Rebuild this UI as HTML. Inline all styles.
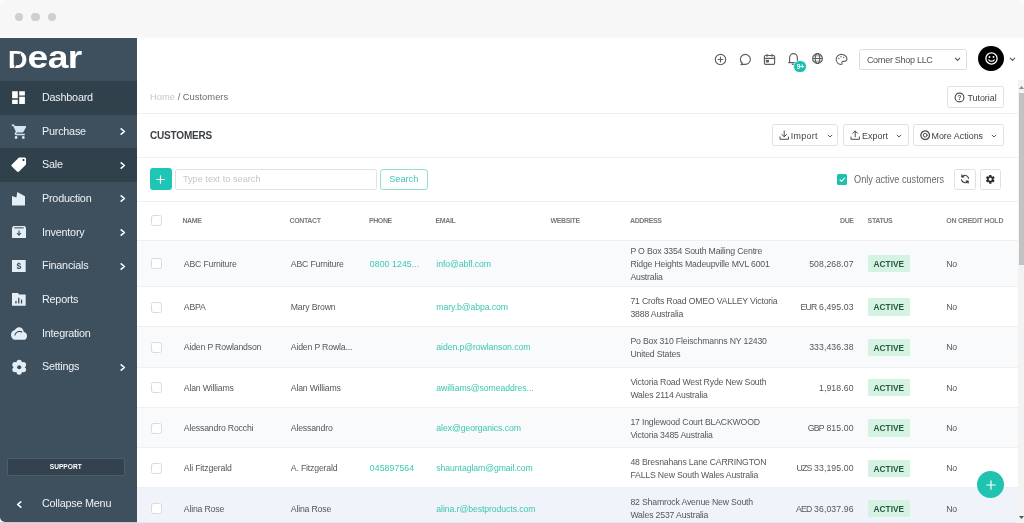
<!DOCTYPE html>
<html lang="en">
<head>
<meta charset="utf-8">
<title>Customers</title>
<style>
*{box-sizing:border-box;margin:0;padding:0}
html,body{width:1024px;height:523px;overflow:hidden;background:#fff}
body{font-family:"Liberation Sans",sans-serif;color:#5a5f66;position:relative;font-size:9.4px}
.abs{position:absolute}
#chrome{border-radius:4px 4px 0 0;position:absolute;left:0;top:0;width:1024px;height:38px;background:#f7f7f7;border-bottom:1px solid #fcfcfc}
.dot{position:absolute;top:12.7px;width:8.6px;height:8.6px;border-radius:50%;background:#cfcfcf}
/* sidebar */
#side{will-change:transform;position:absolute;left:0;top:38px;width:137px;height:484px;background:#3e505e;border-bottom-left-radius:5px;overflow:hidden}
.mi{position:absolute;left:0;width:137px;height:33.67px;color:#eef2f5;font-size:10.8px;line-height:33.67px;letter-spacing:-0.22px}
.mi.dk{background:#30414b}
.mi span{position:absolute;left:42px;top:0;white-space:nowrap}
.mi svg.ic{position:absolute;left:10.5px;top:8.8px;width:16px;height:16px}
.mi svg.ch{position:absolute;left:119px;top:12.3px;width:8px;height:9px}
#support{position:absolute;left:6.5px;top:420px;width:118.5px;height:18px;background:#33424e;border:1px solid #4d5e6b;border-radius:2px;color:#fff;font-weight:bold;font-size:6.6px;text-align:center;line-height:16px}
/* header */
#hdr{will-change:transform;position:absolute;left:137px;top:38px;width:887px;height:42.5px;background:#fff;border-bottom:1px solid #ececec}
#main{will-change:transform;position:absolute;left:137px;top:80px;width:880.5px;height:443px;background:#fff}
.hl{position:absolute;left:0;width:880.5px;height:1px;background:#efefef}
.btn{position:absolute;border:1px solid #e0e0e0;border-radius:2.5px;background:#fff;color:#3f4347;font-size:8.9px;letter-spacing:0;white-space:nowrap}
.t{position:absolute;white-space:nowrap}
.th{position:absolute;top:135px;font-size:7px;font-weight:bold;color:#787b7f;letter-spacing:-0.38px;white-space:nowrap;line-height:10px}
.row{position:absolute;left:0;width:880.5px;border-bottom:1px solid #f0f0f1}
.row.tint{background:#f9fafb}
.row.hov{background:#f1f3fb}
.cb{position:absolute;left:14px;width:11px;height:11px;border:1px solid #dadada;border-radius:2.5px;background:#fff}
.c{position:absolute;white-space:nowrap;line-height:13px;color:#53575c;font-size:8.7px;letter-spacing:-0.17px}
.em{letter-spacing:-0.08px}
.du{letter-spacing:0.1px}
.ph{letter-spacing:0.1px}
.cur{letter-spacing:-0.75px}
.lnk{color:#3cc7b4}
.badge{position:absolute;left:730.5px;width:42.7px;height:17.2px;background:#d4f3e3;color:#27573f;font-weight:bold;font-size:8.3px;line-height:18.9px;text-align:center;border-radius:1px;letter-spacing:0.05px}
#sb{position:absolute;left:1017.5px;top:80px;width:6.5px;height:443px;background:#f3f3f3}
#sbt{position:absolute;left:1px;top:13px;width:5.5px;height:172px;background:#c2c2c2}
#fab{position:absolute;left:977px;top:471.3px;width:27px;height:27px;border-radius:50%;background:#1fc3b0}
</style>
</head>
<body>
<div id="chrome">
  <div class="dot" style="left:14.8px"></div>
  <div class="dot" style="left:31.3px"></div>
  <div class="dot" style="left:47.9px"></div>
</div>

<div id="side">
  <div id="logo" class="abs" style="left:7.6px;top:2px;height:34px;white-space:nowrap;color:#fff;font-weight:bold;line-height:34px;transform-origin:0 50%;transform:scaleX(1.165)"><span style="font-size:23.2px">D</span><span style="font-size:32px;letter-spacing:-0.5px">ear</span></div>
  <svg class="abs" style="left:10px;top:12px;width:16px;height:20px" viewBox="0 0 16 20"><path d="M10.600 3.600L4.400 17.400" stroke="#3e505e" stroke-width="1.300" fill="none"/></svg>
  <div class="mi dk" style="top:43px"><svg class="abs" style="left:10px;top:8.0px;width:17px;height:17px" viewBox="0 0 24 24" ><g fill="#fff"><path d="M3 13h8V3H3v10zm0 8h8v-6H3v6zm10 0h8V11h-8v10zm0-18v6h8V3h-8z"/></g></svg><span>Dashboard</span></div>
  <div class="mi" style="top:76.67px"><svg class="abs" style="left:11.4px;top:8.2px;width:17.4px;height:17.4px" viewBox="0 0 24 24" ><g fill="#d3e4f2"><path d="M7 18c-1.1 0-1.99.9-1.99 2S5.900 22 7 22s2-.9 2-2-.9-2-2-2zM1 2v2h2l3.600 7.590-1.350 2.450c-.16.28-.25.61-.25.96 0 1.1.9 2 2 2h12v-2H7.420c-.14 0-.25-.11-.25-.25l.03-.12.9-1.630h7.450c.75 0 1.410-.41 1.750-1.030l3.580-6.490c.08-.14.12-.31.12-.48 0-.55-.45-1-1-1H5.210l-.94-2H1zm16 16c-1.1 0-1.990.9-1.990 2s.89 2 1.990 2 2-.9 2-2-.9-2-2-2z"/></g></svg><span>Purchase</span><svg class="abs" style="left:119.3px;top:12.3px;width:8px;height:9px" viewBox="0 0 8 9"><path d="M2.200 1.800 L5.400 4.500 L2.200 7.200" fill="none" stroke="#fff" stroke-width="1.600" stroke-linecap="round" stroke-linejoin="round"/></svg></div>
  <div class="mi dk" style="top:110.33px"><svg class="abs" style="left:10.0px;top:7.5px;width:17.5px;height:17.5px" viewBox="0 0 24 24" ><g fill="#fff"><path transform="translate(24 0) scale(-1 1)" d="M21.410 11.580l-9-9C12.050 2.220 11.550 2 11 2H4c-1.1 0-2 .9-2 2v7c0 .55.22 1.050.59 1.420l9 9c.36.36.86.58 1.410.58.55 0 1.050-.22 1.410-.59l7-7c.37-.36.59-.86.59-1.410 0-.55-.23-1.060-.59-1.420zM5.500 7C4.670 7 4 6.330 4 5.500S4.670 4 5.500 4 7 4.670 7 5.500 6.330 7 5.500 7z"/></g></svg><span>Sale</span><svg class="abs" style="left:119.3px;top:12.3px;width:8px;height:9px" viewBox="0 0 8 9"><path d="M2.200 1.800 L5.400 4.500 L2.200 7.200" fill="none" stroke="#fff" stroke-width="1.600" stroke-linecap="round" stroke-linejoin="round"/></svg></div>
  <div class="mi" style="top:144px"><svg class="abs" style="left:12.3px;top:10.4px;width:13px;height:13.6px" viewBox="0 0 13 13.600" ><g fill="#e4eef7"><path d="M0 13.600 V3.900 L4.400 5.500 L5.300 0 L13 4.200 V13.600 Z"/></g></svg><span>Production</span><svg class="abs" style="left:119.3px;top:12.3px;width:8px;height:9px" viewBox="0 0 8 9"><path d="M2.200 1.800 L5.400 4.500 L2.200 7.200" fill="none" stroke="#fff" stroke-width="1.600" stroke-linecap="round" stroke-linejoin="round"/></svg></div>
  <div class="mi" style="top:177.67px"><svg class="abs" style="left:12px;top:10.3px;width:14px;height:12.4px" viewBox="0 0 14 12.400"><path fill="#e4eef7" d="M1.300 0H12.700L14 1.700V11.400a1 1 0 0 1-1 1H1a1 1 0 0 1-1-1V1.700Z"/><rect x="2.300" y="1.300" width="9.400" height="1.100" fill="#3e505e"/><path d="M7 4.400V8.800M5 7L7 9.200L9 7" fill="none" stroke="#3e505e" stroke-width="1.100"/></svg><span>Inventory</span><svg class="abs" style="left:119.3px;top:12.3px;width:8px;height:9px" viewBox="0 0 8 9"><path d="M2.200 1.800 L5.400 4.500 L2.200 7.200" fill="none" stroke="#fff" stroke-width="1.600" stroke-linecap="round" stroke-linejoin="round"/></svg></div>
  <div class="mi" style="top:211.33px"><svg class="abs" style="left:12px;top:10.6px;width:13.7px;height:12px" viewBox="0 0 13.700 12" ><g fill="#e4eef7"><path d="M0 0H13.700V12H0Z"/><text x="6.850" y="9.100" text-anchor="middle" font-family="Liberation Sans,sans-serif" font-weight="bold" font-size="8.600" fill="#3e505e">$</text></g></svg><span>Financials</span><svg class="abs" style="left:119.3px;top:12.3px;width:8px;height:9px" viewBox="0 0 8 9"><path d="M2.200 1.800 L5.400 4.500 L2.200 7.200" fill="none" stroke="#fff" stroke-width="1.600" stroke-linecap="round" stroke-linejoin="round"/></svg></div>
  <div class="mi" style="top:245px"><svg class="abs" style="left:12px;top:10.1px;width:13.7px;height:12.7px" viewBox="0 0 13.700 12.700" ><g fill="#e4eef7"><path d="M0 0H6L7 1.600H13.700V12.700H0Z"/><g fill="#3e505e"><rect x="3.300" y="8" width="1.300" height="2.500"/><rect x="6.100" y="4.800" width="1.300" height="5.700"/><rect x="8.900" y="6.600" width="1.300" height="3.900"/></g></g></svg><span>Reports</span></div>
  <div class="mi" style="top:278.67px"><svg class="abs" style="left:10.9px;top:7.5px;width:16px;height:19px" viewBox="0 0 24 24" preserveAspectRatio="none"><g fill="#e4eef7"><path d="M19.350 10.040C18.670 6.590 15.640 4 12 4 9.110 4 6.600 5.640 5.350 8.040 2.340 8.360 0 10.910 0 14c0 3.310 2.690 6 6 6h13c2.760 0 5-2.240 5-5 0-2.640-2.050-4.780-4.650-4.960z"/><path d="M5.500 14.500 C7 10 12 8 16.800 10.300" fill="none" stroke="#3e505e" stroke-width="1.500"/></g></svg><span>Integration</span></div>
  <div class="mi" style="top:312.33px"><svg class="abs" style="left:9.6px;top:7.9px;width:18.4px;height:18.4px" viewBox="0 0 24 24"><g fill="#e4eef7"><circle cx="12.00" cy="18.30" r="3.500"/><circle cx="17.46" cy="15.15" r="3.500"/><circle cx="17.46" cy="8.85" r="3.500"/><circle cx="12.00" cy="5.70" r="3.500"/><circle cx="6.54" cy="8.85" r="3.500"/><circle cx="6.54" cy="15.15" r="3.500"/><circle cx="12" cy="12" r="7"/></g><circle cx="12" cy="12" r="2.700" fill="#3e505e"/></svg><span>Settings</span><svg class="abs" style="left:119.3px;top:12.3px;width:8px;height:9px" viewBox="0 0 8 9"><path d="M2.200 1.800 L5.400 4.500 L2.200 7.200" fill="none" stroke="#fff" stroke-width="1.600" stroke-linecap="round" stroke-linejoin="round"/></svg></div>
  <div id="support">SUPPORT</div>
  <div class="mi" style="top:449px"><svg class="abs" style="left:14.6px;top:12.5px;width:8px;height:9px" viewBox="0 0 8 9"><path d="M5.800 1.800 L2.600 4.500 L5.800 7.200" fill="none" stroke="#fff" stroke-width="1.600" stroke-linecap="round" stroke-linejoin="round"/></svg><span>Collapse Menu</span></div>
</div>

<div id="hdr">
  <svg class="abs" style="left:577.2px;top:14.6px;width:13px;height:13px" viewBox="0 0 13 13"><g fill="none" stroke="#5f5f5f" stroke-width="1.150" stroke-linecap="round" stroke-linejoin="round"><circle cx="6.5" cy="6.5" r="5.2"/><path d="M6.500 4.100V8.900M4.100 6.500H8.900"/></g></svg>
  <svg class="abs" style="left:602.2px;top:14.5px;width:13px;height:13px" viewBox="0 0 13 13"><g fill="none" stroke="#5f5f5f" stroke-width="1.150" stroke-linecap="round" stroke-linejoin="round"><path d="M3.300 10.300 A5 5 0 1 1 5.100 11.200 L2 11.600 Z"/></g></svg>
  <svg class="abs" style="left:625.5px;top:14.6px;width:13px;height:13px" viewBox="0 0 13 13"><g fill="none" stroke="#5f5f5f" stroke-width="1.150" stroke-linecap="round" stroke-linejoin="round"><rect x="1.400" y="2.500" width="10.200" height="8.800" rx="1"/><path d="M1.400 5.400H11.600M4 1.200V3.300M9 1.200V3.300"/><rect x="3.300" y="7.400" width="2.200" height="1.400" fill="#5f5f5f"/></g></svg>
  <svg class="abs" style="left:649.7px;top:14.4px;width:13px;height:14px" viewBox="0 0 13 14"><g fill="none" stroke="#5f5f5f" stroke-width="1.150" stroke-linecap="round" stroke-linejoin="round"><path d="M1.600 10.600 H11.400 M2.600 10.600 V6 A3.900 4.400 0 0 1 10.400 6 V10.600 M5.300 12.400 H7.700"/></g></svg>
  <div class="abs" id="bdg" style="left:657.4px;top:22.7px;width:11.8px;height:11.8px;border-radius:50%;background:#1fbfb0;box-shadow:0 0 0 0.8px #d9f5f1;color:#fff;font-weight:bold;font-size:6.6px;line-height:11.8px;text-align:center;letter-spacing:-0.3px">9+</div>
  <svg class="abs" style="left:674px;top:14.4px;width:13px;height:13px" viewBox="0 0 13 13"><g fill="none" stroke="#5f5f5f" stroke-width="1.150" stroke-linecap="round" stroke-linejoin="round"><circle cx="6.500" cy="6.500" r="4.900"/><ellipse cx="6.500" cy="6.500" rx="2.200" ry="4.900"/><path d="M1.600 6.500H11.400"/><path d="M2.400 3.900H10.600M2.400 9.100H10.600" stroke-width=".6"/></g></svg>
  <svg class="abs" style="left:698.2px;top:14.5px;width:13px;height:13px" viewBox="0 0 13 13"><g fill="none" stroke="#5f5f5f" stroke-width="1.150" stroke-linecap="round" stroke-linejoin="round"><path d="M6.500 1.400 C3.300 1.400 1.200 3.700 1.200 6.300 C1.200 9 3.300 11.300 5.900 11.500 C7.100 11.600 7.400 10.700 7 9.900 C6.600 9 7.200 8.300 8.100 8.300 H9.700 C11.100 8.300 11.900 7.300 11.900 6.100 C11.900 3.500 9.500 1.400 6.500 1.400 Z"/><g fill="#6a6a6a" stroke="none"><circle cx="3.900" cy="5.600" r=".75"/><circle cx="6" cy="3.800" r=".75"/><circle cx="8.600" cy="4.500" r=".75"/></g></g></svg>
  <div class="abs" id="sel" style="left:722.3px;top:10.5px;width:107.3px;height:21.4px;border:1px solid #dcdcdc;border-radius:2.5px;background:#fff">
    <span class="t" id="cst" style="left:6.600px;top:4.400px;line-height:12px;font-size:9px;color:#4f5359;letter-spacing:-0.29px">Corner Shop LLC</span>
    <svg class="abs" style="left:93.500px;top:7.200px;width:7px;height:5px" viewBox="0 0 7 5"><path d="M1.300 1.200 L3.500 3.400 L5.700 1.200" fill="none" stroke="#555" stroke-width="1.100" stroke-linecap="round" stroke-linejoin="round"/></svg>
  </div>
  <div class="abs" id="ava" style="left:841.3px;top:8px;width:25.4px;height:25.4px;border-radius:50%;background:#000"></div>
  <svg class="abs" style="left:846.5px;top:13.2px;width:15px;height:15px" viewBox="0 0 15 15"><g fill="none" stroke="#fff" stroke-width="1.300" stroke-linecap="round"><circle cx="7.500" cy="7.500" r="5.600"/><path d="M4.900 8.900 C5.600 10.600 9.400 10.600 10.100 8.900"/></g><circle cx="5.500" cy="6" r=".95" fill="#fff"/><circle cx="9.500" cy="6" r=".95" fill="#fff"/></svg>
  <svg class="abs" style="left:871.5px;top:18.8px;width:7px;height:5px" viewBox="0 0 7 5"><path d="M1.300 1.200 L3.500 3.400 L5.700 1.200" fill="none" stroke="#555" stroke-width="1.100" stroke-linecap="round" stroke-linejoin="round"/></svg>
</div>

<div id="main"><div id="mw" class="abs" style="left:0;top:0.5px;width:880.5px;height:443px">
  <div class="t" id="bc" style="left:13px;top:10px;line-height:12px;font-size:9.4px"><span style="color:#c8c8c8">Home</span> <span style="color:#6d6d6d">/ Customers</span></div>
  <div class="btn" id="tut" style="left:810.3px;top:5.8px;width:56.6px;height:21.3px"><svg class="abs" style="left:5.7px;top:4.9px;width:11px;height:11px" viewBox="0 0 11 11"><g fill="none" stroke="#4a4a4a" stroke-width="1.1" stroke-linecap="round" stroke-linejoin="round"><circle cx="5.500" cy="5.500" r="4.400"/></g><text x="5.500" y="7.800" text-anchor="middle" font-family="Liberation Sans,sans-serif" font-weight="bold" font-size="6.500" fill="#4a4a4a">?</text></svg><span class="t" style="left:19.2px;top:4.5px;line-height:12px;letter-spacing:-0.02px">Tutorial</span></div>
  <div class="hl" style="top:32.5px"></div>
  <div class="t" id="ttl" style="left:13px;top:48.4px;line-height:14px;font-size:10px;font-weight:bold;color:#3b3f45;letter-spacing:-0.18px">CUSTOMERS</div>
  <div class="btn" id="imp" style="left:634.7px;top:43.6px;width:66.6px;height:21.6px"><svg class="abs" style="left:6.6px;top:5.4px;width:10.4px;height:10.4px" viewBox="0 0 10.400 10.400"><g fill="none" stroke="#4a4a4a" stroke-width="1" stroke-linecap="round" stroke-linejoin="round"><path d="M5.200 1V6.700M2.900 4.500L5.200 6.800L7.500 4.500M1 7V9.300H9.400V7"/></g></svg><span class="t" style="left:18px;top:4.6px;line-height:12px;letter-spacing:0.35px">Import</span><svg class="abs" style="left:54.1px;top:9.1px;width:6px;height:4.4px" viewBox="0 0 6 4.400"><path d="M1.100 1.100 L3 3 L4.900 1.100" fill="none" stroke="#555" stroke-width="1" stroke-linecap="round" stroke-linejoin="round"/></svg></div>
  <div class="btn" id="exp" style="left:705.6px;top:43.6px;width:66px;height:21.6px"><svg class="abs" style="left:6.6px;top:5.4px;width:10.400px;height:10.400px" viewBox="0 0 10.400 10.400"><g fill="none" stroke="#4a4a4a" stroke-width="1" stroke-linecap="round" stroke-linejoin="round"><path d="M5.200 6.800V1.100M2.900 3.300L5.200 1L7.500 3.300M1 7V9.300H9.400V7"/></g></svg><span class="t" style="left:18.3px;top:4.6px;line-height:12px;letter-spacing:0.07px">Export</span><svg class="abs" style="left:52.4px;top:9.1px;width:6px;height:4.4px" viewBox="0 0 6 4.400"><path d="M1.100 1.100 L3 3 L4.900 1.100" fill="none" stroke="#555" stroke-width="1" stroke-linecap="round" stroke-linejoin="round"/></svg></div>
  <div class="btn" id="mor" style="left:775.5px;top:43.6px;width:91.3px;height:21.6px"><svg class="abs" style="left:6.4px;top:5.4px;width:10.400px;height:10.400px" viewBox="0 0 10.400 10.400"><g fill="none" stroke="#4a4a4a" stroke-width="1" stroke-linecap="round" stroke-linejoin="round"><circle cx="5.200" cy="5.200" r="4.300" stroke-width="1.300" stroke-dasharray="2.300 0.700"/><circle cx="5.200" cy="5.200" r="1.900"/></g></svg><span class="t" style="left:18px;top:4.6px;line-height:12px;letter-spacing:0.02px">More Actions</span><svg class="abs" style="left:77.7px;top:9.1px;width:6px;height:4.4px" viewBox="0 0 6 4.400"><path d="M1.100 1.100 L3 3 L4.900 1.100" fill="none" stroke="#555" stroke-width="1" stroke-linecap="round" stroke-linejoin="round"/></svg></div>
  <div class="hl" style="top:76.5px"></div>
  <div id="add" class="abs" style="left:13px;top:87.8px;width:21.6px;height:21.6px;background:#1fc6b6;border-radius:3px"><svg class="abs" style="left:6.3px;top:6.3px;width:9px;height:9px" viewBox="0 0 9 9"><path d="M4.500 .8V8.200M.8 4.500H8.200" fill="none" stroke="#fff" stroke-width="1.200" stroke-linecap="round"/></svg></div>
  <div id="inp" class="abs" style="left:38.4px;top:88px;width:201.4px;height:21.2px;border:1px solid #e1e1e1;border-radius:2.5px;background:#fff"><span class="t" style="left:6.5px;top:3.6px;line-height:12px;color:#c6c6c6;font-size:9.2px">Type text to search</span></div>
  <div id="srch" class="abs" style="left:243px;top:88px;width:47.5px;height:21.2px;border:1px solid #94dfd5;border-radius:3px;background:#fff;color:#3cc7b4;text-align:center;line-height:19px;font-size:9.2px">Search</div>
  <div id="chk" class="abs" style="left:699.7px;top:93.7px;width:10.5px;height:10.5px;background:#1fc0ae;border-radius:1.5px"><svg class="abs" style="left:2px;top:2.4px;width:6.5px;height:5.5px" viewBox="0 0 6.500 5.500"><path d="M1 2.900L2.600 4.400L5.500 1.100" fill="none" stroke="#fff" stroke-width="1.100" stroke-linecap="round" stroke-linejoin="round"/></svg></div>
  <div class="t" id="oac" style="left:717px;top:93.6px;line-height:12px;font-size:10.2px;color:#666a6f;transform:scaleX(.9);transform-origin:0 50%">Only active customers</div>
  <div class="btn" id="rfr" style="left:817.4px;top:88px;width:21.2px;height:21.2px"><svg class="abs" style="left:4.6px;top:4.6px;width:10px;height:10px" viewBox="0 0 10 10"><g fill="none" stroke="#333" stroke-width="1.100" stroke-linecap="round" stroke-linejoin="round"><path d="M8.600 4.300A3.700 3.700 0 0 0 2.100 2.700M1.400 5.700A3.700 3.700 0 0 0 7.900 7.300"/><path d="M1.900 .9V2.900H3.900M8.100 9.100V7.100H6.100"/></g></svg></div>
  <div class="btn" id="set" style="left:842.8px;top:88px;width:21.2px;height:21.2px"><svg class="abs" style="left:4.3px;top:4.3px;width:10.6px;height:10.6px" viewBox="0 0 24 24"><path fill="#2e2e2e" d="M19.430 12.980c.04-.32.07-.64.07-.98s-.03-.66-.07-.98l2.110-1.650c.19-.15.24-.42.12-.64l-2-3.460c-.12-.22-.39-.3-.61-.22l-2.490 1c-.52-.4-1.080-.73-1.690-.98l-.38-2.650C14.460 2.180 14.250 2 14 2h-4c-.25 0-.46.18-.49.42l-.38 2.650c-.61.25-1.170.59-1.690.98l-2.490-1c-.23-.09-.49 0-.61.22l-2 3.460c-.13.22-.07.49.12.64l2.110 1.650c-.04.32-.07.65-.07.980s.03.66.07.980l-2.110 1.650c-.19.15-.24.42-.12.640l2 3.460c.12.22.39.300.61.220l2.490-1c.52.400 1.080.730 1.690.980l.38 2.650c.03.240.24.420.49.420h4c.25 0 .46-.18.49-.42l.38-2.650c.61-.25 1.170-.59 1.690-.98l2.490 1c.23.090.49 0 .61-.22l2-3.460c.12-.22.070-.49-.12-.64l-2.110-1.650zM12 15.500c-1.930 0-3.500-1.570-3.500-3.500s1.570-3.500 3.500-3.500 3.500 1.570 3.500 3.500-1.570 3.500-3.500 3.500z"/></svg></div>
  <div class="hl" style="top:120.3px"></div>
  <div class="cb" style="top:134.6px"></div>
  <div class="th" style="left:45.4px">NAME</div>
  <div class="th" style="left:152.5px">CONTACT</div>
  <div class="th" style="left:231.9px">PHONE</div>
  <div class="th" style="left:298.5px">EMAIL</div>
  <div class="th" style="left:413.5px">WEBSITE</div>
  <div class="th" style="left:493px">ADDRESS</div>
  <div class="th" style="left:703px">DUE</div>
  <div class="th" style="left:730.6px">STATUS</div>
  <div class="th" style="left:809.3px;letter-spacing:-0.24px">ON CREDIT HOLD</div>
  <div class="hl" style="top:159px"></div>
  <div class="row tint" style="top:160.0px;height:46.4px">
    <div class="cb" style="top:17.9px"></div>
    <div class="c nm" style="left:46.8px;top:17.5px">ABC Furniture</div>
    <div class="c ct" style="left:153.8px;top:17.5px">ABC Furniture</div>
    <div class="c ph lnk" style="left:232.8px;top:17.5px">0800 1245...</div>
    <div class="c em lnk" style="left:299.3px;top:17.5px">info@abfl.com</div>
    <div class="c ad" style="left:493.4px;top:4.5px">P O Box 3354 South Mailing Centre<br>Ridge Heights Madeupville MVL 6001<br>Australia</div>
    <div class="c du" style="right:163.9px;top:17.5px">508,268.07</div>
    <div class="badge" style="top:14.7px">ACTIVE</div>
    <div class="c no" style="left:809.2px;top:17.5px">No</div>
  </div>
  <div class="row " style="top:206.4px;height:39.9px">
    <div class="cb" style="top:14.7px"></div>
    <div class="c nm" style="left:46.8px;top:14.3px">ABPA</div>
    <div class="c ct" style="left:153.8px;top:14.3px">Mary Brown</div>
    <div class="c em lnk" style="left:299.3px;top:14.3px">mary.b@abpa.com</div>
    <div class="c ad" style="left:493.4px;top:7.8px">71 Crofts Road OMEO VALLEY Victoria<br>3888 Australia</div>
    <div class="c du" style="right:163.9px;top:14.3px"><span class="cur">EUR</span> 6,495.03</div>
    <div class="badge" style="top:11.5px">ACTIVE</div>
    <div class="c no" style="left:809.2px;top:14.3px">No</div>
  </div>
  <div class="row tint" style="top:246.3px;height:40.9px">
    <div class="cb" style="top:15.1px"></div>
    <div class="c nm" style="left:46.8px;top:14.7px">Aiden P Rowlandson</div>
    <div class="c ct" style="left:153.8px;top:14.7px">Aiden P Rowla...</div>
    <div class="c em lnk" style="left:299.3px;top:14.7px">aiden.p@rowlanson.com</div>
    <div class="c ad" style="left:493.4px;top:8.2px">Po Box 310 Fleischmanns NY 12430<br>United States</div>
    <div class="c du" style="right:163.9px;top:14.7px">333,436.38</div>
    <div class="badge" style="top:11.9px">ACTIVE</div>
    <div class="c no" style="left:809.2px;top:14.7px">No</div>
  </div>
  <div class="row " style="top:287.2px;height:40.2px">
    <div class="cb" style="top:14.8px"></div>
    <div class="c nm" style="left:46.8px;top:14.4px">Alan Williams</div>
    <div class="c ct" style="left:153.8px;top:14.4px">Alan Williams</div>
    <div class="c em lnk" style="left:299.3px;top:14.4px">awilliams@someaddres...</div>
    <div class="c ad" style="left:493.4px;top:7.9px">Victoria Road West Ryde New South<br>Wales 2114 Australia</div>
    <div class="c du" style="right:163.9px;top:14.4px">1,918.60</div>
    <div class="badge" style="top:11.6px">ACTIVE</div>
    <div class="c no" style="left:809.2px;top:14.4px">No</div>
  </div>
  <div class="row tint" style="top:327.4px;height:40.1px">
    <div class="cb" style="top:14.8px"></div>
    <div class="c nm" style="left:46.8px;top:14.4px">Alessandro Rocchi</div>
    <div class="c ct" style="left:153.8px;top:14.4px">Alessandro</div>
    <div class="c em lnk" style="left:299.3px;top:14.4px">alex@georganics.com</div>
    <div class="c ad" style="left:493.4px;top:7.9px">17 Inglewood Court BLACKWOOD<br>Victoria 3485 Australia</div>
    <div class="c du" style="right:163.9px;top:14.4px"><span class="cur">GBP</span> 815.00</div>
    <div class="badge" style="top:11.6px">ACTIVE</div>
    <div class="c no" style="left:809.2px;top:14.4px">No</div>
  </div>
  <div class="row " style="top:367.5px;height:40.2px">
    <div class="cb" style="top:14.8px"></div>
    <div class="c nm" style="left:46.8px;top:14.4px">Ali Fitzgerald</div>
    <div class="c ct" style="left:153.8px;top:14.4px">A. Fitzgerald</div>
    <div class="c ph lnk" style="left:232.8px;top:14.4px">045897564</div>
    <div class="c em lnk" style="left:299.3px;top:14.4px">shauntaglam@gmail.com</div>
    <div class="c ad" style="left:493.4px;top:7.9px">48 Bresnahans Lane CARRINGTON<br>FALLS New South Wales Australia</div>
    <div class="c du" style="right:163.9px;top:14.4px"><span class="cur">UZS</span> 33,195.00</div>
    <div class="badge" style="top:11.6px">ACTIVE</div>
    <div class="c no" style="left:809.2px;top:14.4px">No</div>
  </div>
  <div class="row hov" style="top:407.7px;height:40.3px">
    <div class="cb" style="top:14.9px"></div>
    <div class="c nm" style="left:46.8px;top:14.5px">Alina Rose</div>
    <div class="c ct" style="left:153.8px;top:14.5px">Alina Rose</div>
    <div class="c em lnk" style="left:299.3px;top:14.5px">alina.r@bestproducts.com</div>
    <div class="c ad" style="left:493.4px;top:8.0px">82 Shamrock Avenue New South<br>Wales 2537 Australia</div>
    <div class="c du" style="right:163.9px;top:14.5px"><span class="cur">AED</span> 36,037.96</div>
    <div class="badge" style="top:11.7px">ACTIVE</div>
    <div class="c no" style="left:809.2px;top:14.5px">No</div>
  </div>
</div></div>

<div id="sb"><div id="sbt"></div><svg class="abs" style="left:1.2px;top:5.5px;width:5px;height:3px" viewBox="0 0 5 3"><path d="M0 3L2.500 0L5 3Z" fill="#8a8a8a"/></svg><svg class="abs" style="left:1.2px;top:435.5px;width:5px;height:3px" viewBox="0 0 5 3"><path d="M0 0L2.500 3L5 0Z" fill="#555"/></svg></div>
<div class="abs" style="left:0;top:522px;width:137px;height:1px;background:#c9d0d5"></div><div class="abs" style="left:137px;top:522px;width:880px;height:1px;background:#e6e7ee"></div>
<div id="fab"><svg class="abs" style="left:8.5px;top:8.5px;width:10px;height:10px" viewBox="0 0 10 10"><path d="M5 .8V9.200M.8 5H9.200" fill="none" stroke="#fff" stroke-width="1.200" stroke-linecap="round"/></svg></div>
</body>
</html>
